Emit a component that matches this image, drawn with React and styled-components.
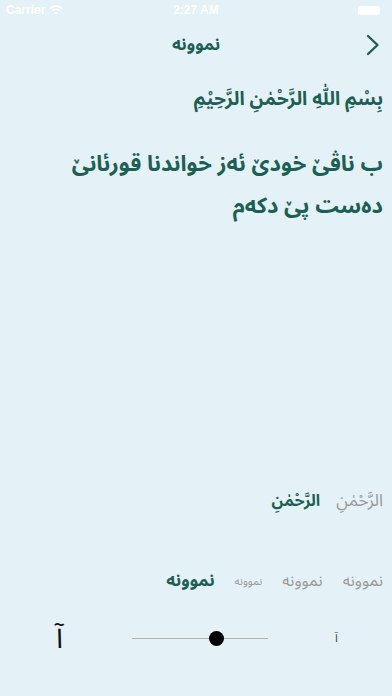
import React from "react";
import styled, { createGlobalStyle } from "styled-components";

const Global = createGlobalStyle`
  html, body { margin: 0; padding: 0; background: #e4f1f7; }
  body { font-family: "Noto Sans Arabic", "DejaVu Sans", "Noto Sans", sans-serif; }
  #root { height: 696px; }
`;

const Page = styled.div`
  height: 696px;
  display: flex;
  flex-direction: column;
  background: #e4f1f7;
  overflow: hidden;
`;

const StatusBar = styled.div`
  height: 20px;
  display: grid;
  grid-template-columns: 1fr auto 1fr;
  align-items: center;
  padding: 0 6px;
  color: #fff;
  font-family: "Liberation Sans", Arial, sans-serif;
  font-size: 12px;
  font-weight: 600;
`;

const Left = styled.div`
  display: flex;
  align-items: center;
  gap: 4px;
`;

const Right = styled.div`
  display: flex;
  justify-content: flex-end;
`;

const Battery = styled.div`
  width: 22px;
  height: 9px;
  border-radius: 3px;
  background: #fff;
  margin-right: 6px;
`;

const NavBar = styled.div`
  height: 50px;
  display: flex;
  align-items: center;
  justify-content: center;
  position: relative;
`;

const Title = styled.div`
  color: #1d5f52;
  font-size: 17px;
  font-weight: bold;
  direction: rtl;
`;

const Chevron = styled.div`
  position: absolute;
  right: 12px;
  top: 14px;
`;

const Content = styled.div`
  direction: rtl;
  padding: 14px 9px 0 20px;
  color: #1d5f52;
`;

const Basmala = styled.div`
  font-size: 19px;
  font-weight: bold;
  line-height: 30px;
`;

const Paragraph = styled.div`
  margin-top: 29px;
  font-size: 22px;
  font-weight: bold;
  line-height: 42px;
`;

const Spacer = styled.div`
  flex: 1;
`;

const Row = styled.div`
  direction: rtl;
  display: flex;
  align-items: center;
  padding: 0 9px;
  gap: ${(p) => p.gap}px;
  height: ${(p) => p.h}px;
  margin-top: ${(p) => p.mt || 0}px;
`;

const Option = styled.div`
  color: ${(p) => (p.active ? "#1d5f52" : "#9a9a9a")};
  font-size: ${(p) => p.size}px;
  font-weight: ${(p) => (p.bold ? "bold" : "normal")};
  white-space: nowrap;
`;

const SliderRow = styled.div`
  display: flex;
  align-items: center;
  height: 74px;
  padding: 0 0 0 56px;
  margin-bottom: 21px;
`;

const BigA = styled.div`
  font-size: 30px;
  color: #111;
  width: 76px;
`;

const Track = styled.div`
  position: relative;
  width: 136px;
  height: 1px;
  background: #b0b0b0;
`;

const Thumb = styled.div`
  position: absolute;
  top: -7px;
  width: 15px;
  height: 15px;
  border-radius: 50%;
  background: #000;
`;

const SmallA = styled.div`
  font-size: 12px;
  color: #444;
  margin-left: 67px;
`;

export default function App() {
  return (
    <Page>
      <Global />
      <StatusBar>
        <Left>
          <span>Carrier</span>
          <svg width="14" height="10" viewBox="0 0 14 10">
            <path d="M1 3.5a8.5 8.5 0 0 1 12 0" stroke="#fff" strokeWidth="1.6" fill="none" />
            <path d="M3.3 5.8a5.2 5.2 0 0 1 7.4 0" stroke="#fff" strokeWidth="1.6" fill="none" />
            <path d="M7 9.5l-1.8-1.8a2.5 2.5 0 0 1 3.6 0z" fill="#fff" />
          </svg>
        </Left>
        <span>2:27 AM</span>
        <Right>
          <Battery />
        </Right>
      </StatusBar>
      <NavBar>
        <Title>نموونه</Title>
        <Chevron>
          <svg width="14" height="22" viewBox="0 0 14 22">
            <path d="M2 2l9.5 9-9.5 9" stroke="#1d5f52" strokeWidth="2.4" fill="none" strokeLinecap="round" strokeLinejoin="round" />
          </svg>
        </Chevron>
      </NavBar>
      <Content>
        <Basmala>بِسْمِ اللّٰهِ الرَّحْمٰنِ الرَّحِيْمِ</Basmala>
        <Paragraph>ب ناڤێ خودێ ئەز خواندنا قورئانێ دەست پێ دکەم</Paragraph>
      </Content>
      <Spacer />
      <Row h={60} gap={16}>
        <Option size={17}>الرَّحْمٰنِ</Option>
        <Option size={16} active bold>الرَّحْمٰنِ</Option>
      </Row>
      <Row h={40} gap={20} mt={30}>
        <Option size={16}>نموونه</Option>
        <Option size={16}>نموونه</Option>
        <Option size={11}>نموونه</Option>
        <Option size={17} active bold>نموونه</Option>
      </Row>
      <SliderRow>
        <BigA>آ</BigA>
        <Track>
          <Thumb style={{ left: 77 }} />
        </Track>
        <SmallA>آ</SmallA>
      </SliderRow>
    </Page>
  );
}
